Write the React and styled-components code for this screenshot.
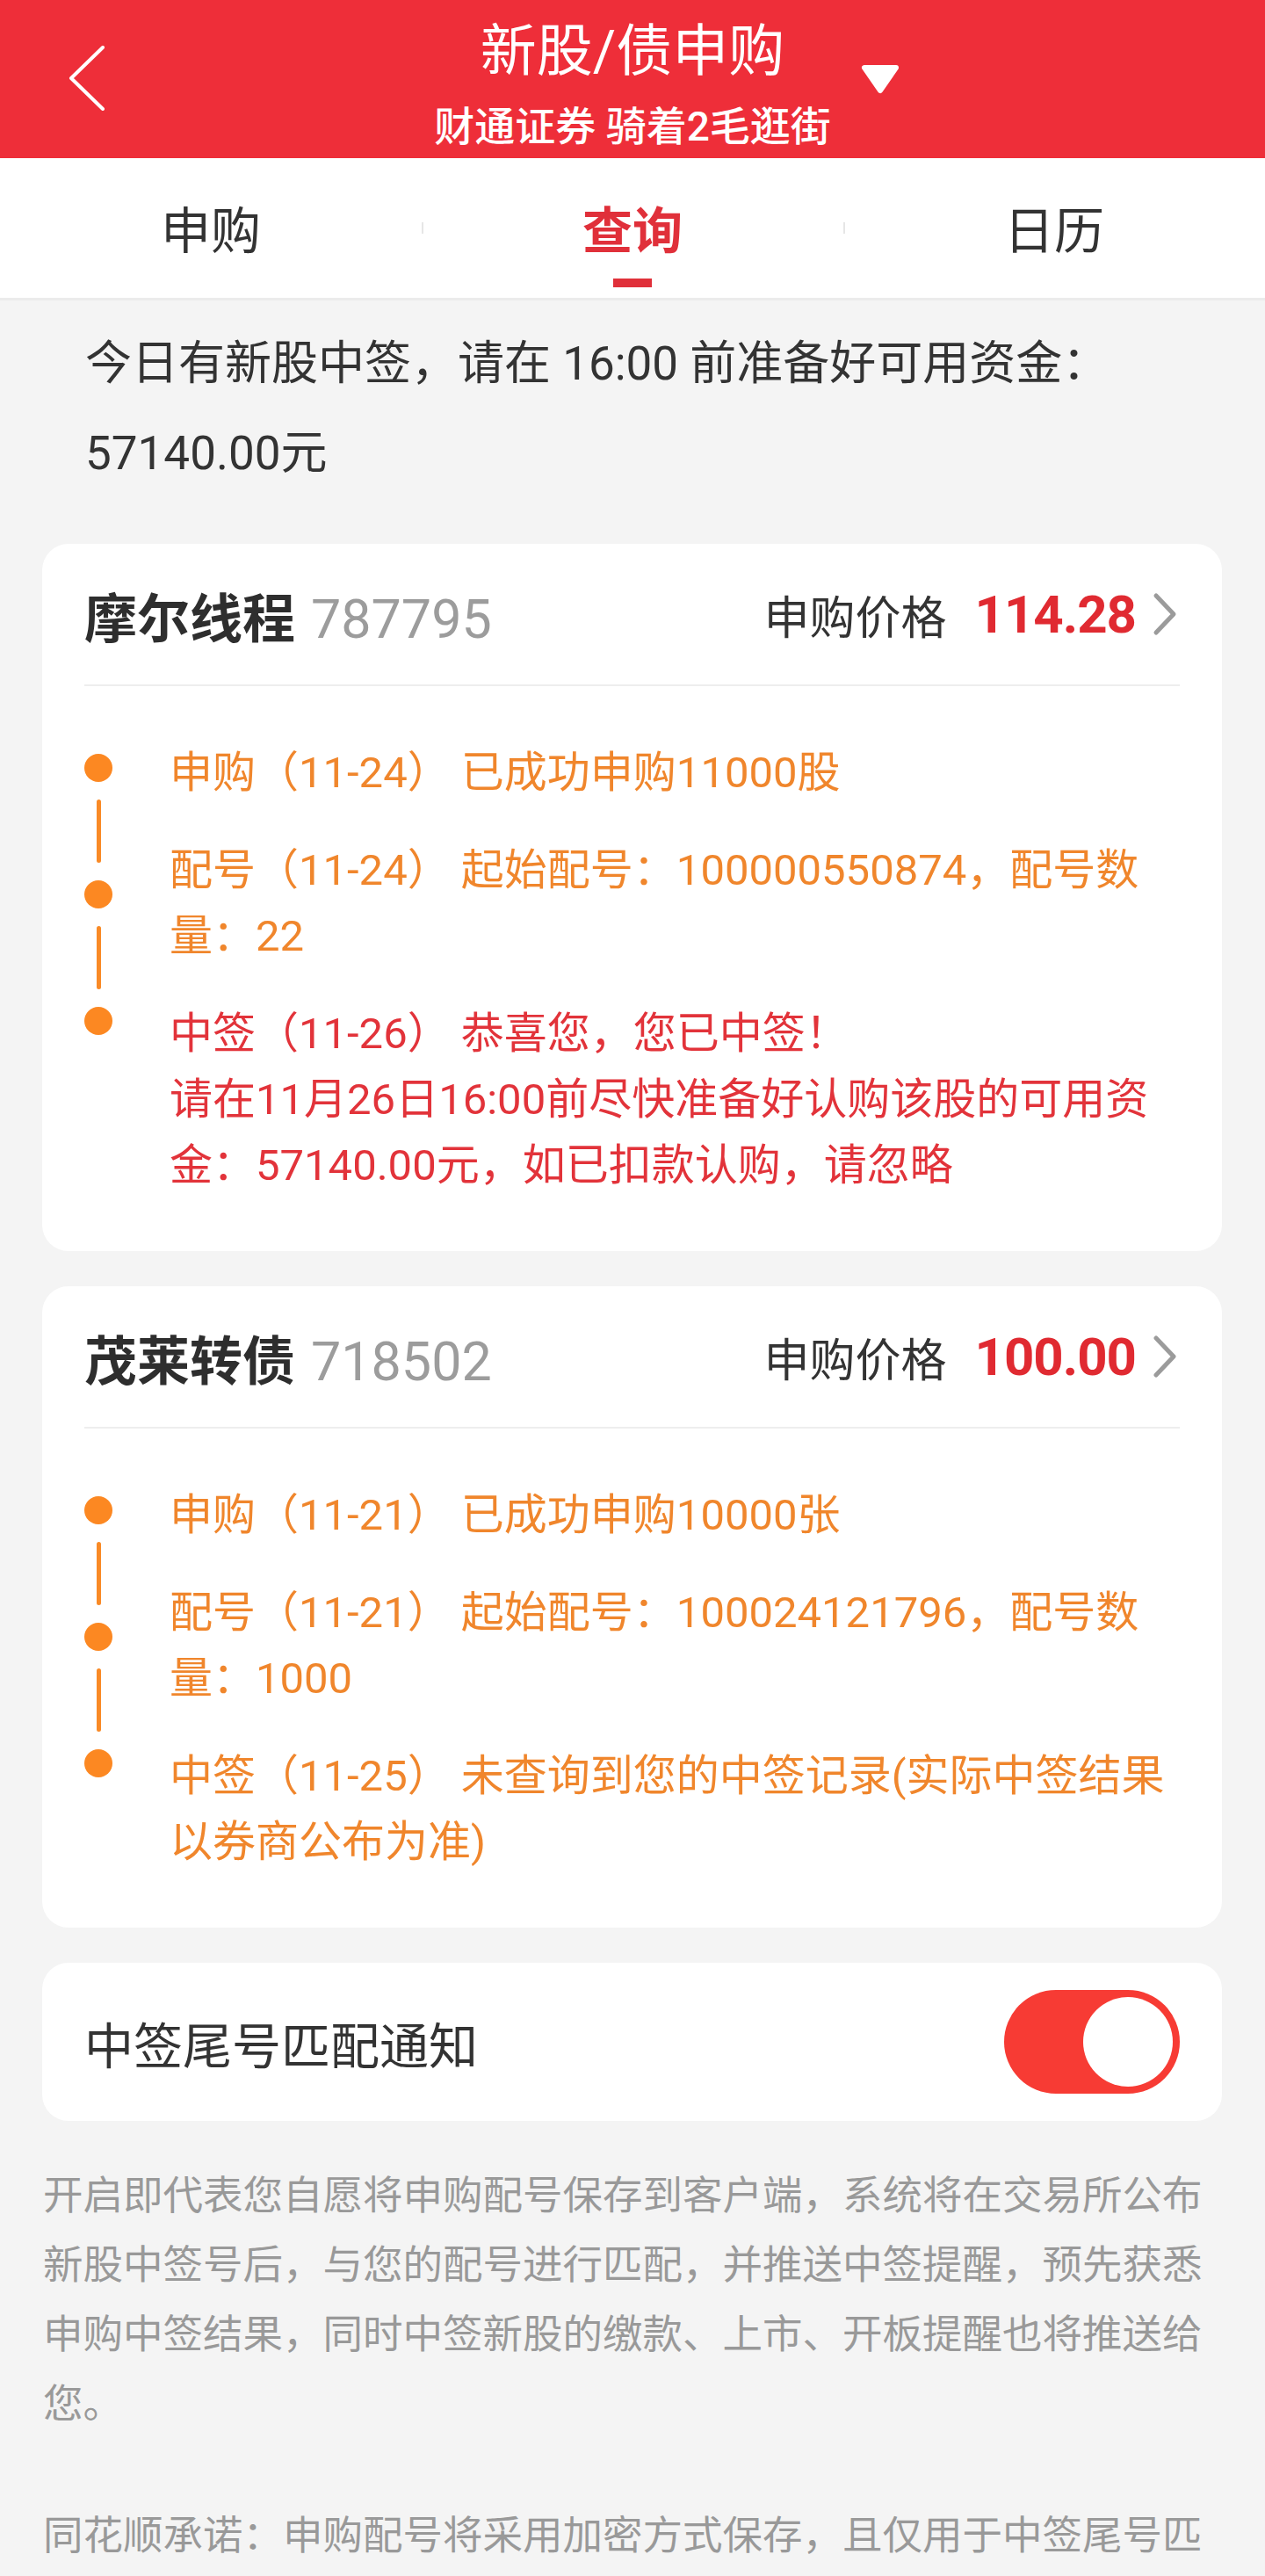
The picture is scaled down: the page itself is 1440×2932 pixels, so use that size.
import React from "react";
import styled, { createGlobalStyle } from "styled-components";

const FONT = `"Roboto", "Noto Sans CJK SC", sans-serif`;

const records = [
  {
    name: "摩尔线程",
    code: "787795",
    price: "114.28",
    steps: [
      { text: "申购（11-24） 已成功申购11000股" },
      { text: "配号（11-24） 起始配号：100000550874，配号数量：22" },
      {
        text: "中签（11-26） 恭喜您，您已中签！\n请在11月26日16:00前尽快准备好认购该股的可用资金：57140.00元，如已扣款认购，请忽略",
        tone: "red",
      },
    ],
  },
  {
    name: "茂莱转债",
    code: "718502",
    price: "100.00",
    steps: [
      { text: "申购（11-21） 已成功申购10000张" },
      { text: "配号（11-21） 起始配号：100024121796，配号数量：1000" },
      { text: "中签（11-25） 未查询到您的中签记录(实际中签结果以券商公布为准)" },
    ],
  },
];

const tabs = ["申购", "查询", "日历"];

function Steps({ steps }) {
  return (
    <StepsWrap>
      <Timeline>
        {steps.map((step, i) => (
          <React.Fragment key={i}>
            {i > 0 && <Stem />}
            <Dot />
          </React.Fragment>
        ))}
      </Timeline>
      <StepList>
        {steps.map((step, i) => (
          <StepText key={i} tone={step.tone}>
            {step.text}
          </StepText>
        ))}
      </StepList>
    </StepsWrap>
  );
}

function App() {
  return (
    <Page>
      <GlobalStyle />
      <Header>
        <BackSlot>
          <svg width="42" height="74" viewBox="0 0 42 74" fill="none">
            <polyline
              points="39,2 3,37 39,72"
              stroke="#fff"
              strokeWidth="4"
              strokeLinecap="round"
              strokeLinejoin="round"
            />
          </svg>
        </BackSlot>
        <TitleBlock>
          <Title>新股/债申购</Title>
          <Subtitle>财通证券 骑着2毛逛街</Subtitle>
        </TitleBlock>
        <MenuSlot>
          <svg width="44" height="34" viewBox="0 0 44 34">
            <polygon
              points="4,4 40,4 22,30"
              fill="#fff"
              stroke="#fff"
              strokeWidth="6"
              strokeLinejoin="round"
            />
          </svg>
        </MenuSlot>
      </Header>

      <TabBar>
        {tabs.map((tab, i) => (
          <Tab key={tab} first={i === 0}>
            <TabLabel active={i === 1}>{tab}</TabLabel>
            <TabMark active={i === 1} />
          </Tab>
        ))}
      </TabBar>

      <Notice>今日有新股中签，请在 16:00 前准备好可用资金：57140.00元</Notice>

      <CardList>
        {records.map((rec) => (
          <Card key={rec.code}>
            <CardHead>
              <NameGroup>
                <Name>{rec.name}</Name>
                <Code>{rec.code}</Code>
              </NameGroup>
              <PriceGroup>
                <PriceLabel>申购价格</PriceLabel>
                <Price>{rec.price}</Price>
                <svg width="30" height="50" viewBox="0 0 30 50" fill="none">
                  <polyline
                    points="5,4 25,25 5,46"
                    stroke="#9b9b9b"
                    strokeWidth="5"
                    strokeLinecap="round"
                    strokeLinejoin="round"
                  />
                </svg>
              </PriceGroup>
            </CardHead>
            <Rule />
            <Steps steps={rec.steps} />
          </Card>
        ))}

        <SwitchCard>
          <SwitchLabel>中签尾号匹配通知</SwitchLabel>
          <Toggle role="switch" aria-checked="true" on>
            <Knob />
          </Toggle>
        </SwitchCard>
      </CardList>

      <Footnote>
        <p>
          开启即代表您自愿将申购配号保存到客户端，系统将在交易所公布新股中签号后，与您的配号进行匹配，并推送中签提醒，预先获悉申购中签结果，同时中签新股的缴款、上市、开板提醒也将推送给您。
        </p>
        <p>
          同花顺承诺：申购配号将采用加密方式保存，且仅用于中签尾号匹配通知服务，不会用于其他任何用途。
        </p>
      </Footnote>
    </Page>
  );
}

export default App;

const GlobalStyle = createGlobalStyle`
  html, body {
    margin: 0;
    padding: 0;
    background: #f4f4f4;
  }
  * {
    box-sizing: border-box;
  }
`;

const Page = styled.div`
  min-height: 2932px;
  background: #f4f4f4;
  font-family: ${FONT};
  color: #333;
`;

const Header = styled.header`
  display: grid;
  grid-template-columns: 1fr auto 1fr;
  height: 180px;
  background: #ee2e39;
  color: #fff;
`;

const BackSlot = styled.div`
  padding: 52px 0 0 78px;
`;

const TitleBlock = styled.div`
  display: flex;
  flex-direction: column;
  align-items: center;
  padding-top: 22px;
`;

const Title = styled.div`
  font-size: 64px;
  line-height: 74px;
`;

const Subtitle = styled.div`
  margin-top: 20px;
  font-size: 46px;
  line-height: 56px;
  font-weight: 500;
`;

const MenuSlot = styled.div`
  padding: 73px 0 0 34px;
`;

const TabBar = styled.nav`
  display: grid;
  grid-template-columns: repeat(3, 1fr);
  height: 162px;
  background: #fff;
  border-bottom: 3px solid #ebebeb;
`;

const Tab = styled.div`
  position: relative;
  display: flex;
  flex-direction: column;
  align-items: center;
  padding-top: 54px;

  &::before {
    content: "";
    display: ${({ first }) => (first ? "none" : "block")};
    position: absolute;
    left: 0;
    top: 73px;
    width: 2px;
    height: 13px;
    background: #e6e6e6;
  }
`;

const TabLabel = styled.span`
  font-size: 57px;
  line-height: 60px;
  font-weight: ${({ active }) => (active ? 700 : 400)};
  color: ${({ active }) => (active ? "#e0303a" : "#333")};
`;

const TabMark = styled.span`
  margin-top: 23px;
  width: 44px;
  height: 10px;
  background: ${({ active }) => (active ? "#e0303a" : "transparent")};
`;

const Notice = styled.div`
  padding: 21px 96px 0 97px;
  font-size: 53px;
  line-height: 102px;
  color: #333;
`;

const CardList = styled.div`
  display: flex;
  flex-direction: column;
  gap: 40px;
  margin: 52px 49px 0 48px;
`;

const Card = styled.section`
  background: #fff;
  border-radius: 30px;
  padding: 0 48px 60px;
`;

const CardHead = styled.div`
  display: flex;
  align-items: center;
  justify-content: space-between;
  height: 160px;
`;

const NameGroup = styled.div`
  display: flex;
  align-items: baseline;
`;

const Name = styled.span`
  font-size: 60px;
  font-weight: 700;
  color: #2e2e2e;
`;

const Code = styled.span`
  margin-left: 18px;
  font-size: 61px;
  color: #9c9c9c;
`;

const PriceGroup = styled.div`
  display: flex;
  align-items: center;
  margin-right: 2px;
`;

const PriceLabel = styled.span`
  font-size: 52px;
  color: #333;
`;

const Price = styled.span`
  margin: 0 18px 0 32px;
  font-size: 60px;
  font-weight: 700;
  letter-spacing: -1px;
  color: #e02a31;
`;

const Rule = styled.div`
  height: 2px;
  background: #eeeeee;
`;

const StepsWrap = styled.div`
  display: flex;
  gap: 65px;
  padding: 61px 10px 0 0;
`;

const Timeline = styled.div`
  display: flex;
  flex-direction: column;
  align-items: center;
  gap: 20px;
  width: 32px;
  padding-top: 16px;
  flex-shrink: 0;
`;

const Dot = styled.span`
  width: 32px;
  height: 32px;
  border-radius: 50%;
  background: #fc8822;
`;

const Stem = styled.span`
  width: 5px;
  height: 72px;
  border-radius: 3px;
  background: #f98a26;
`;

const StepList = styled.div`
  flex: 1;
  display: flex;
  flex-direction: column;
  gap: 36px;
`;

const StepText = styled.p`
  margin: 0;
  font-size: 49px;
  line-height: 75px;
  white-space: pre-line;
  color: ${({ tone }) => (tone === "red" ? "#e2333a" : "#f0862c")};
`;

const SwitchCard = styled.section`
  display: flex;
  align-items: center;
  justify-content: space-between;
  height: 180px;
  padding: 0 48px;
  background: #fff;
  border-radius: 30px;
`;

const SwitchLabel = styled.span`
  font-size: 56px;
  color: #333;
`;

const Toggle = styled.div`
  display: flex;
  align-items: center;
  justify-content: ${({ on }) => (on ? "flex-end" : "flex-start")};
  width: 200px;
  height: 118px;
  padding: 0 8px;
  border-radius: 59px;
  background: ${({ on }) => (on ? "#f73b34" : "#ddd")};
`;

const Knob = styled.span`
  width: 102px;
  height: 102px;
  border-radius: 50%;
  background: #fff;
`;

const Footnote = styled.div`
  padding: 46px 49px 0;
  font-size: 45.5px;
  line-height: 79px;
  color: #999;

  p {
    margin: 0 0 71px;
  }
`;
